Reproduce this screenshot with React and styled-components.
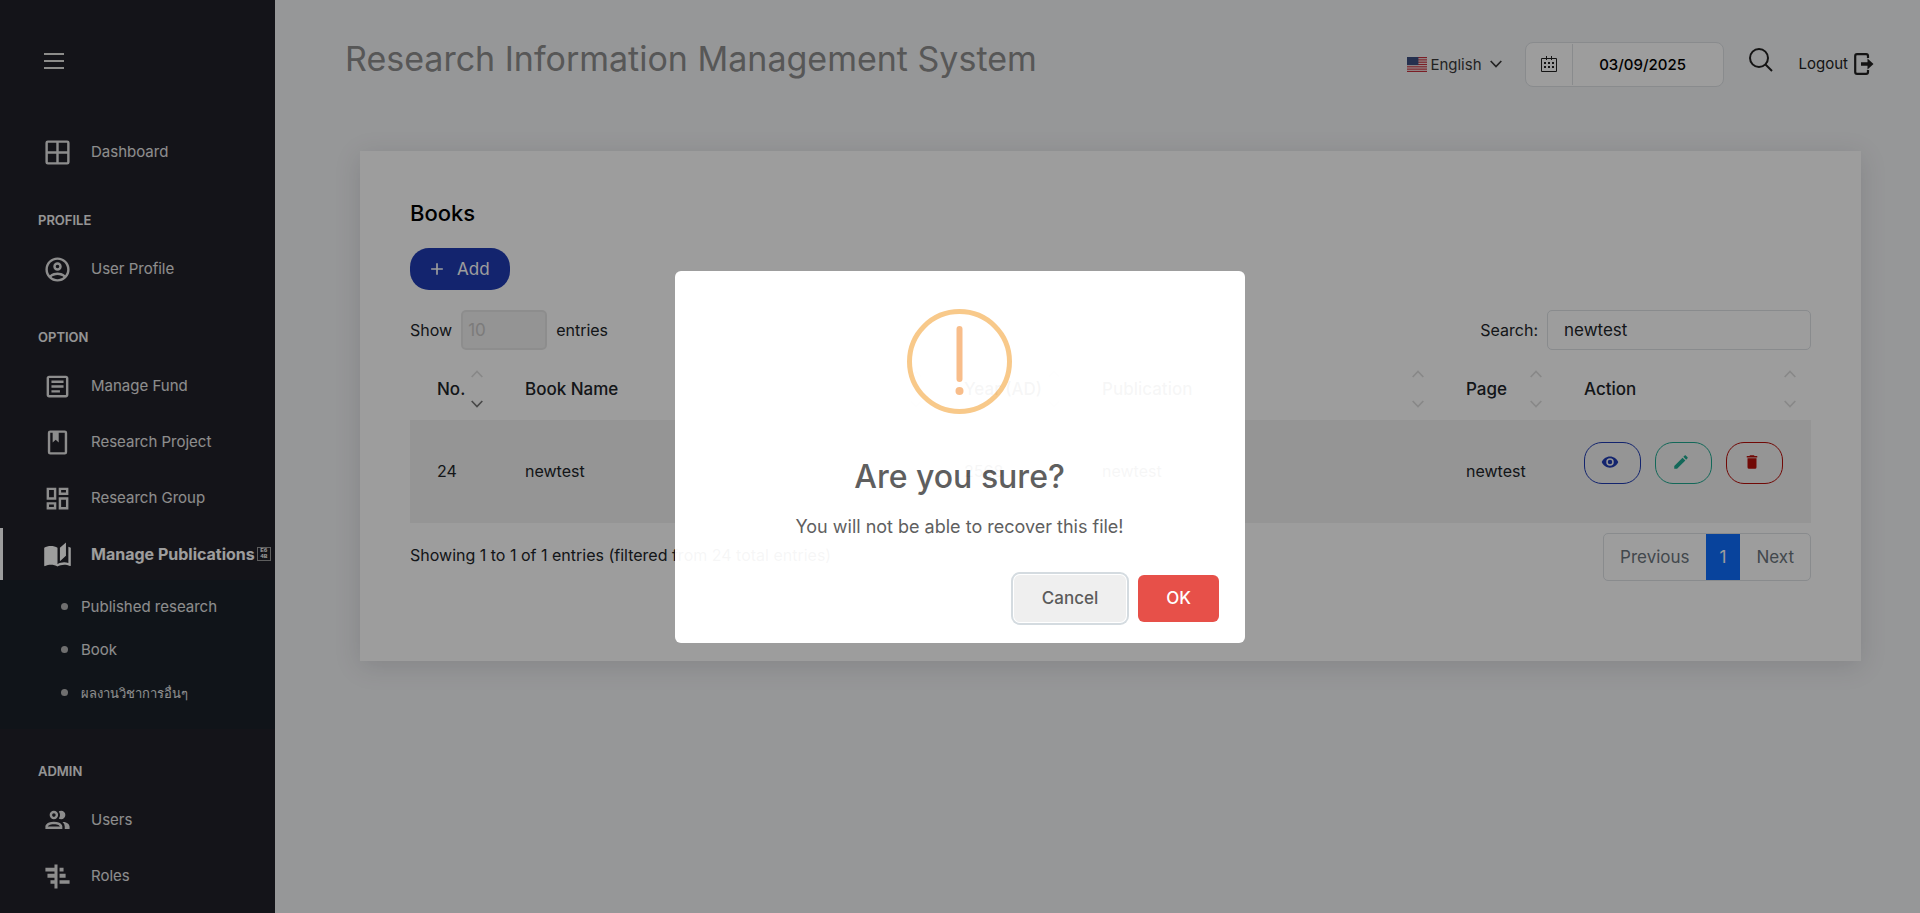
import React from "react";
import styled, { createGlobalStyle } from "styled-components";

const GlobalStyle = createGlobalStyle`
  *, *::before, *::after { box-sizing: border-box; }
  body {
    margin: 0;
    background: #f4f5f7;
    color: #212529;
    font-family: Inter, "Noto Sans", "Liberation Sans", sans-serif;
    font-size: 16px;
    line-height: 24px;
  }
  a { color: inherit; text-decoration: none; }
  button, input, select { font-family: inherit; margin: 0; }
`;

/* ---------- icons ---------- */

const paths = {
  grid: "M4,2H20A2,2 0 0,1 22,4V20A2,2 0 0,1 20,22H4A2,2 0 0,1 2,20V4A2,2 0 0,1 4,2M4,4V11H11V4H4M20,20V13H13V20H20M4,20H11V13H4V20M20,4H13V11H20V4Z",
  account:
    "M12,2A10,10 0 0,0 2,12A10,10 0 0,0 12,22A10,10 0 0,0 22,12A10,10 0 0,0 12,2M7.07,18.28C7.5,17.38 10.12,16.5 12,16.5C13.88,16.5 16.5,17.38 16.93,18.28C15.57,19.36 13.86,20 12,20C10.14,20 8.43,19.36 7.07,18.28M18.36,16.83C16.93,15.09 13.46,14.5 12,14.5C10.54,14.5 7.07,15.09 5.64,16.83C4.62,15.5 4,13.82 4,12C4,7.59 7.59,4 12,4C16.41,4 20,7.59 20,12C20,13.82 19.38,15.5 18.36,16.83M12,6C10.06,6 8.5,7.56 8.5,9.5C8.5,11.44 10.06,13 12,13C13.94,13 15.5,11.44 15.5,9.5C15.5,7.56 13.94,6 12,6M12,11A1.5,1.5 0 0,1 10.5,9.5A1.5,1.5 0 0,1 12,8A1.5,1.5 0 0,1 13.5,9.5A1.5,1.5 0 0,1 12,11Z",
  document:
    "M5,3C3.89,3 3,3.89 3,5V19C3,20.11 3.89,21 5,21H19C20.11,21 21,20.11 21,19V5C21,3.89 20.11,3 19,3H5M5,5H19V19H5V5M7,7V9H17V7H7M7,11V13H17V11H7M7,15V17H14V15H7Z",
  book: "M18,2A2,2 0 0,1 20,4V20A2,2 0 0,1 18,22H6A2,2 0 0,1 4,20V4A2,2 0 0,1 6,2H18M18,4H13V12L10.5,9.75L8,12V4H6V20H18V4Z",
  dashboard:
    "M19,5V7H15V5H19M9,5V11H5V5H9M19,13V19H15V13H19M9,17V19H5V17H9M21,3H13V9H21V3M11,3H3V13H11V3M21,11H13V21H21V11M11,15H3V21H11V15Z",
  openBook:
    "M19,2L14,6.5V17.5L19,13V2M6.5,5C4.55,5 2.45,5.4 1,6.5V21.16C1,21.41 1.25,21.66 1.5,21.66C1.6,21.66 1.65,21.59 1.75,21.59C3.1,20.94 5.05,20.5 6.5,20.5C8.45,20.5 10.55,20.9 12,22C13.35,21.15 15.8,20.5 17.5,20.5C19.15,20.5 20.85,20.81 22.25,21.56C22.35,21.61 22.4,21.59 22.5,21.59C22.75,21.59 23,21.34 23,21.09V6.5C22.4,6.05 21.75,5.75 21,5.5V19C19.9,18.65 18.7,18.5 17.5,18.5C15.8,18.5 13.35,19.15 12,20V6.5C10.55,5.4 8.45,5 6.5,5Z",
  users:
    "M13.07 10.41A5 5 0 0 0 13.07 4.59A3.39 3.39 0 0 1 15 4A3.5 3.5 0 0 1 15 11A3.39 3.39 0 0 1 13.07 10.41M5.5 7.5A3.5 3.5 0 1 1 9 11A3.5 3.5 0 0 1 5.5 7.5M7.5 7.5A1.5 1.5 0 1 0 9 6A1.5 1.5 0 0 0 7.5 7.5M16 17V19H2V17S2 13 9 13 16 17 16 17M14 17C13.86 16.22 12.67 15 9 15S4.07 16.31 4 17M15.95 13A5.32 5.32 0 0 1 18 17V19H22V17S22 13.37 15.94 13Z",
  roles:
    "M9.5,2H12V22H9.5ZM2,4.7H9.5V7.8H2ZM3.7,9.8H9.5V13H3.7ZM6.2,15.2H9.5V18H6.2ZM13.7,4.7H17V7.8H13.7ZM13.7,9.8H18.7V13H13.7ZM13.7,15.2H22V18H13.7Z",
  eye: "M12,9A3,3 0 0,0 9,12A3,3 0 0,0 12,15A3,3 0 0,0 15,12A3,3 0 0,0 12,9M12,17A5,5 0 0,1 7,12A5,5 0 0,1 12,7A5,5 0 0,1 17,12A5,5 0 0,1 12,17M12,4.5C7,4.5 2.73,7.61 1,12C2.73,16.39 7,19.5 12,19.5C17,19.5 21.27,16.39 23,12C21.27,7.61 17,4.5 12,4.5Z",
  pencil:
    "M20.71,7.04C21.1,6.65 21.1,6 20.71,5.63L18.37,3.29C18,2.9 17.35,2.9 16.96,3.29L15.12,5.12L18.87,8.87M3,17.25V21H6.75L17.81,9.93L14.06,6.18L3,17.25Z",
  trash:
    "M19,4H15.5L14.5,3H9.5L8.5,4H5V6H19M6,19A2,2 0 0,0 8,21H16A2,2 0 0,0 18,19V7H6V19Z",
  plus: "M19,13H13V19H11V13H5V11H11V5H13V11H19V13Z",
};

const Icon = ({ name, size }) => (
  <svg width={size} height={size} viewBox="0 0 24 24" fill="currentColor" aria-hidden="true">
    <path d={paths[name]} fillRule="evenodd" />
  </svg>
);

const FlagIcon = () => (
  <svg width="20" height="15" viewBox="0 0 20 15" aria-hidden="true">
    <rect width="20" height="15" fill="#f3eeee" />
    {[0, 1, 2, 3, 4, 5, 6].map((i) => (
      <rect key={i} y={i * 2.31} width="20" height="1.15" fill="#c8323f" />
    ))}
    <rect width="11.4" height="8.1" fill="#3c4f80" />
  </svg>
);

const ChevronIcon = ({ up }) => (
  <svg width="12" height="8" viewBox="0 0 12 8" fill="none" stroke="currentColor" strokeWidth="1.7" aria-hidden="true">
    <path d={up ? "M0.7,7L6,1.5L11.3,7" : "M0.7,1L6,6.5L11.3,1"} />
  </svg>
);

const CalendarIcon = () => (
  <svg width="16" height="16" viewBox="0 0 16 16" fill="none" stroke="currentColor" aria-hidden="true">
    <path d="M0.5,2.5H15.5V15.5H0.5ZM5.5,0V4M10.5,0V4" />
    <path d="M3,7H13M3,11H13" strokeWidth="2" strokeDasharray="2 2" />
  </svg>
);

const SearchIcon = () => (
  <svg width="24" height="24" viewBox="0 0 24 24" fill="none" stroke="currentColor" strokeWidth="2" aria-hidden="true">
    <circle cx="10" cy="10" r="9" />
    <path d="M16.5,16.5L23,23" />
  </svg>
);

const LogoutIcon = () => (
  <svg width="20" height="22" viewBox="0 0 20 22" aria-hidden="true">
    <path d="M14,5V3Q14,1.2 12.2,1.2H3Q1.2,1.2 1.2,3V19Q1.2,20.8 3,20.8H12.2Q14,20.8 14,19V17" fill="none" stroke="currentColor" strokeWidth="2.2" />
    <path d="M7,9.2H13.5V5.5L19.5,11L13.5,16.5V12.8H7Z" fill="currentColor" />
  </svg>
);

/* ---------- shell ---------- */

const Page = styled.div`
  display: flex;
  align-items: stretch;
  min-height: 100vh;
`;

const Sidebar = styled.nav`
  flex: 0 0 275px;
  padding-bottom: 11px;
  background: #222129;
  color: #fff;
`;

const MenuToggle = styled.button`
  display: flex;
  flex-direction: column;
  gap: 5px;
  margin: 53px 0 57px 44px;
  padding: 0;
  border: 0;
  background: none;
`;

const ToggleLine = styled.span`
  width: 20px;
  height: 2px;
  background: #e4e4e0;
`;

const NavItem = styled.a`
  display: flex;
  align-items: center;
  height: 52px;
  margin-bottom: ${(p) => (p.$active ? "0" : "4px")};
  padding-left: ${(p) => (p.$active ? "40px" : "43px")};
  border-left: ${(p) => (p.$active ? "3px solid #fff" : "0")};
  font-size: ${(p) => (p.$active ? "16px" : "15px")};
  font-weight: ${(p) => (p.$active ? 700 : 400)};
  color: ${(p) => (p.$active ? "#fff" : "#e6e6e6")};
  white-space: nowrap;
  svg {
    flex: none;
    margin-right: 19px;
  }
`;

const NavLabel = styled.h2`
  height: 61px;
  margin: 0;
  padding: 27px 0 0 38px;
  font-size: 13px;
  line-height: 22px;
  font-weight: 600;
  color: #f2f2f2;
`;

const MissingGlyph = styled.span`
  display: grid;
  place-content: center;
  width: 14px;
  height: 14px;
  margin-left: 2px;
  border: 1px solid #999;
  font: 700 6px/6px "Liberation Mono", monospace;
  text-align: center;
`;

const SubMenu = styled.ul`
  margin: 0 0 4px;
  padding: 5px 0 15px 61px;
  list-style: none;
  background: #1a222a;
`;

const SubItem = styled.li`
  display: flex;
  align-items: center;
  gap: 13px;
  height: 43px;
  font-size: 15px;
  color: #e6e6e6;
  &::before {
    content: "";
    width: 7px;
    height: 7px;
    border-radius: 50%;
    background: #b5b5b5;
  }
  a:lang(th) { font-size: 13px; }
`;

const Main = styled.main`
  flex: 1;
  min-width: 0;
`;

const TopBar = styled.header`
  display: flex;
  align-items: center;
  justify-content: space-between;
  height: 128px;
  padding: 0 46px 0 70px;
`;

const SystemTitle = styled.h1`
  margin: 0;
  padding-bottom: 10px;
  font-size: 34px;
  line-height: 44px;
  font-weight: 400;
  color: #8d8d8d;
`;

const Tools = styled.div`
  display: flex;
  align-items: center;
`;

const LanguageButton = styled.button`
  display: flex;
  align-items: center;
  gap: 3px;
  padding: 0;
  border: 0;
  background: none;
  font-size: 15px;
  color: #3a3a3a;
  svg:last-child { margin-left: 5px; }
`;

const DateField = styled.label`
  display: flex;
  align-items: center;
  width: 199px;
  height: 45px;
  margin: 0 25px 0 23px;
  border: 1px solid #dee2e6;
  border-radius: 8px;
  background: #fff;
  color: #222;
`;

const DateIcon = styled.span`
  display: grid;
  place-items: center;
  flex: 0 0 47px;
  height: 41px;
  border-right: 1px solid #dee2e6;
`;

const DateInput = styled.input`
  flex: 1;
  min-width: 0;
  padding: 0 10px 0 0;
  border: 0;
  background: none;
  font-size: 15px;
  font-weight: 500;
  color: #000;
  text-align: center;
`;

const IconButton = styled.button`
  display: flex;
  padding: 0 0 8px;
  border: 0;
  background: none;
  color: #222;
`;

const LogoutLink = styled.a`
  display: flex;
  align-items: center;
  gap: 6px;
  margin-left: 26px;
  font-size: 15px;
  color: #222;
`;

/* ---------- card ---------- */

const Card = styled.section`
  margin: 23px 59px 0 85px;
  padding: 50px 50px 80px;
  background: #fff;
  box-shadow: 0 5px 25px rgba(40, 44, 60, 0.14);
`;

const CardTitle = styled.h3`
  margin: 0 0 23px;
  font-size: 22px;
  line-height: 24px;
  font-weight: 500;
  color: #000;
`;

const AddButton = styled.button`
  display: flex;
  align-items: center;
  gap: 10px;
  height: 42px;
  padding: 0 20px 0 17px;
  border: 0;
  border-radius: 19px;
  background: #1f3bb3;
  color: #fff;
  font-size: 17px;
`;

const Controls = styled.div`
  display: flex;
  align-items: center;
  justify-content: space-between;
  height: 40px;
  margin-top: 20px;
`;

const FieldLabel = styled.label`
  display: flex;
  align-items: center;
  gap: 9px;
`;

const LengthSelect = styled.select`
  appearance: none;
  width: 86px;
  height: 40px;
  padding: 0 5px;
  border: 2px solid #e6e6e6;
  border-radius: 5px;
  background: #f0f0f0;
  font-size: 17px;
  color: #c9c8c8;
  opacity: 1;
`;

const SearchInput = styled.input`
  width: 264px;
  height: 40px;
  padding: 0 16px;
  border: 1px solid #dee2e6;
  border-radius: 5px;
  background: #fff;
  font-size: 17px;
  color: #212529;
`;

const DataTable = styled.table`
  width: 100%;
  table-layout: fixed;
  border-collapse: collapse;
`;

const Col = styled.col`
  width: ${(p) => p.$w || "auto"};
`;

const HeadCell = styled.th`
  height: 70px;
  padding: 8px 15px 0 27px;
  font-size: 17px;
  font-weight: 500;
  text-align: left;
  white-space: nowrap;
`;

const HeadContent = styled.div`
  display: flex;
  align-items: center;
  justify-content: space-between;
`;

const SortMarks = styled.span`
  display: flex;
  flex-direction: column;
  gap: 22px;
  color: #ddd;
  svg:last-child { color: ${(p) => (p.$sorted ? "#777" : "#ddd")}; }
`;

const Cell = styled.td`
  height: 103px;
  padding: ${(p) => (p.$actions ? "0 0 18px 27px" : "0 0 2px 27px")};
  background: #f2f2f2;
`;

const Actions = styled.div`
  display: flex;
  gap: 14px;
`;

const ActionButton = styled.button`
  display: grid;
  place-items: center start;
  width: 57px;
  height: 42px;
  padding: 0 0 2px 16px;
  border: 1px solid ${(p) => p.$color};
  border-radius: 18px;
  background: none;
  color: ${(p) => p.$color};
`;

const CardFooter = styled.div`
  display: flex;
  align-items: center;
  justify-content: space-between;
  margin-top: 10px;
`;

const Info = styled.p`
  margin: 0;
  padding-bottom: 4px;
`;

const Pagination = styled.div`
  display: flex;
  height: 48px;
  border: 1px solid #dee2e6;
  border-radius: 5px;
  overflow: hidden;
`;

const PageButton = styled.button`
  padding: 0 ${(p) => (p.$current ? "14px" : "16px")};
  border: 0;
  background: ${(p) => (p.$current ? "#0d6efd" : "none")};
  color: ${(p) => (p.$current ? "#fff" : "#6c757d")};
  font-size: 17px;
`;

/* ---------- dialog ---------- */

const Overlay = styled.div`
  position: fixed;
  inset: 0;
  display: grid;
  place-items: center;
  background: rgba(0, 0, 0, 0.4);
  opacity: 0.96;
`;

const Dialog = styled.div`
  width: 570px;
  padding: 38px 26px 21px 25px;
  border-radius: 6px;
  background: #fff;
  color: #595959;
  text-align: center;
  > svg {
    display: block;
    margin: 0 auto;
  }
`;

const DialogTitle = styled.h2`
  margin: 44px 0 17px;
  font-size: 32px;
  line-height: 38px;
  font-weight: 500;
`;

const DialogText = styled.p`
  margin: 0 0 34px;
  font-size: 18px;
  line-height: 28px;
`;

const DialogActions = styled.div`
  display: flex;
  justify-content: flex-end;
  gap: 12px;
`;

const DialogButton = styled.button`
  height: 47px;
  padding: 0 28px;
  border: 0;
  border-radius: 6px;
  background: ${(p) => (p.$danger ? "#e64942" : "#efefef")};
  color: ${(p) => (p.$danger ? "#fff" : "#555")};
  font-size: 17px;
  font-weight: 500;
  box-shadow: ${(p) => (p.$focused ? "0 0 0 1px #fff, 0 0 0 3px #d3dadf" : "none")};
`;

const WarningIcon = () => (
  <svg width="105" height="105" viewBox="0 0 105 105" role="img" aria-label="Warning">
    <circle cx="52.5" cy="52.5" r="50" fill="none" stroke="#f8c786" strokeWidth="5" />
    <rect x="49.5" y="17" width="6" height="56" rx="3" fill="#f8bb86" />
    <circle cx="52.5" cy="82" r="4" fill="#f8bb86" />
  </svg>
);

/* ---------- data ---------- */

const optionItems = [
  ["document", "Manage Fund"],
  ["book", "Research Project"],
  ["dashboard", "Research Group"],
];

const publicationLinks = [
  ["en", "Published research"],
  ["en", "Book"],
  ["th", "ผลงานวิชาการอื่นๆ"],
];

const columns = [
  { title: "No.", width: "88px", sorted: true },
  { title: "Book Name", width: "439px" },
  { title: "Year (AD)", width: "138px" },
  { title: "Publication" },
  { title: "Page", width: "118px" },
  { title: "Action", width: "254px" },
];

const rowActions = [
  ["eye", "View", "#1f3bb3"],
  ["pencil", "Edit", "#1faa91"],
  ["trash", "Delete", "#b80f0a"],
];

const NavLink = ({ icon, label }) => (
  <NavItem href="#">
    <Icon name={icon} size={29} />
    {label}
  </NavItem>
);

export default function App() {
  return (
    <>
      <GlobalStyle />
      <Page>
        <Sidebar>
          <MenuToggle aria-label="Toggle menu">
            <ToggleLine />
            <ToggleLine />
            <ToggleLine />
          </MenuToggle>
          <NavLink icon="grid" label="Dashboard" />
          <NavLabel>PROFILE</NavLabel>
          <NavLink icon="account" label="User Profile" />
          <NavLabel>OPTION</NavLabel>
          {optionItems.map(([icon, label]) => (
            <NavLink key={label} icon={icon} label={label} />
          ))}
          <NavItem href="#" $active>
            <Icon name="openBook" size={29} />
            Manage Publications
            <MissingGlyph aria-hidden="true">
              <span>E6</span>
              <span>4B</span>
            </MissingGlyph>
          </NavItem>
          <SubMenu>
            {publicationLinks.map(([lang, label]) => (
              <SubItem key={label}>
                <a href="#" lang={lang}>{label}</a>
              </SubItem>
            ))}
          </SubMenu>
          <NavLabel>ADMIN</NavLabel>
          <NavLink icon="users" label="Users" />
          <NavLink icon="roles" label="Roles" />
        </Sidebar>

        <Main>
          <TopBar>
            <SystemTitle>Research Information Management System</SystemTitle>
            <Tools>
              <LanguageButton>
                <FlagIcon />
                English
                <ChevronIcon />
              </LanguageButton>
              <DateField>
                <DateIcon>
                  <CalendarIcon />
                </DateIcon>
                <DateInput type="text" aria-label="Date" defaultValue="03/09/2025" />
              </DateField>
              <IconButton aria-label="Search">
                <SearchIcon />
              </IconButton>
              <LogoutLink href="#">
                Logout
                <LogoutIcon />
              </LogoutLink>
            </Tools>
          </TopBar>

          <Card>
            <CardTitle>Books</CardTitle>
            <AddButton>
              <Icon name="plus" size={20} />
              Add
            </AddButton>
            <Controls>
              <FieldLabel>
                Show
                <LengthSelect disabled defaultValue="10">
                  <option>10</option>
                </LengthSelect>
                entries
              </FieldLabel>
              <FieldLabel>
                Search:
                <SearchInput type="text" defaultValue="newtest" />
              </FieldLabel>
            </Controls>
            <DataTable>
              <colgroup>
                {columns.map((c) => (
                  <Col key={c.title} $w={c.width} />
                ))}
              </colgroup>
              <thead>
                <tr>
                  {columns.map((c) => (
                    <HeadCell key={c.title}>
                      <HeadContent>
                        {c.title}
                        <SortMarks $sorted={c.sorted}>
                          <ChevronIcon up />
                          <ChevronIcon />
                        </SortMarks>
                      </HeadContent>
                    </HeadCell>
                  ))}
                </tr>
              </thead>
              <tbody>
                <tr>
                  <Cell>24</Cell>
                  <Cell>newtest</Cell>
                  <Cell>2568</Cell>
                  <Cell>newtest</Cell>
                  <Cell>newtest</Cell>
                  <Cell $actions>
                    <Actions>
                      {rowActions.map(([icon, label, color]) => (
                        <ActionButton key={icon} $color={color} aria-label={label}>
                          <Icon name={icon} size={18} />
                        </ActionButton>
                      ))}
                    </Actions>
                  </Cell>
                </tr>
              </tbody>
            </DataTable>
            <CardFooter>
              <Info>Showing 1 to 1 of 1 entries (filtered from 24 total entries)</Info>
              <Pagination>
                <PageButton>Previous</PageButton>
                <PageButton $current>1</PageButton>
                <PageButton>Next</PageButton>
              </Pagination>
            </CardFooter>
          </Card>
        </Main>
      </Page>

      <Overlay>
        <Dialog role="alertdialog" aria-labelledby="dialog-title" aria-describedby="dialog-text">
          <WarningIcon />
          <DialogTitle id="dialog-title">Are you sure?</DialogTitle>
          <DialogText id="dialog-text">You will not be able to recover this file!</DialogText>
          <DialogActions>
            <DialogButton $focused>Cancel</DialogButton>
            <DialogButton $danger>OK</DialogButton>
          </DialogActions>
        </Dialog>
      </Overlay>
    </>
  );
}
